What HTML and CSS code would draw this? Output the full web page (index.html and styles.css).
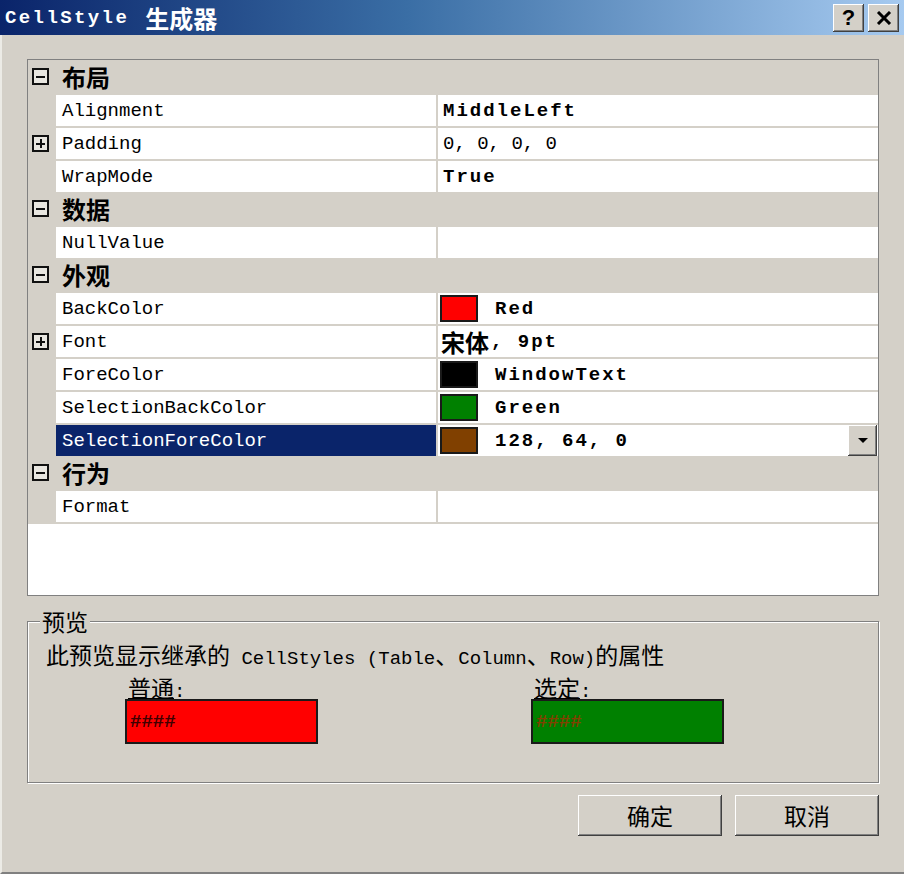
FILE: index.html
```html
<!DOCTYPE html>
<html lang="zh-CN">
<head>
<meta charset="utf-8">
<title>CellStyle 生成器</title>
<link rel="stylesheet" href="styles.css">
</head>
<body>
<div class="window">
  <div class="titlebar">
    <div class="title"><span class="lat">CellStyle</span><span class="zh">生成器</span></div>
    <div class="tbtns">
      <div class="tbtn help">?</div>
      <div class="tbtn close"><svg width="16" height="14" viewBox="0 0 16 14"><path d="M2 1 L14 13 M14 1 L2 13" stroke="#000" stroke-width="3" fill="none"/></svg></div>
    </div>
  </div>
  <div class="main">
    <div class="grid">
      <div class="row cat"><div class="gut"><span class="exp"></span></div><div class="cat-label">布局</div></div>
      <div class="row prop"><div class="gut"></div><div class="name">Alignment</div><div class="val bold">MiddleLeft</div></div>
      <div class="row prop"><div class="gut"><span class="exp plus"></span></div><div class="name">Padding</div><div class="val">0, 0, 0, 0</div></div>
      <div class="row prop"><div class="gut"></div><div class="name">WrapMode</div><div class="val bold">True</div></div>
      <div class="row cat"><div class="gut"><span class="exp"></span></div><div class="cat-label">数据</div></div>
      <div class="row prop"><div class="gut"></div><div class="name">NullValue</div><div class="val"></div></div>
      <div class="row cat"><div class="gut"><span class="exp"></span></div><div class="cat-label">外观</div></div>
      <div class="row prop"><div class="gut"></div><div class="name">BackColor</div><div class="val bold"><span class="swatch red"></span>Red</div></div>
      <div class="row prop"><div class="gut"><span class="exp plus"></span></div><div class="name">Font</div><div class="val bold font-val"><span class="zhb">宋体</span>, 9pt</div></div>
      <div class="row prop"><div class="gut"></div><div class="name">ForeColor</div><div class="val bold"><span class="swatch black"></span>WindowText</div></div>
      <div class="row prop"><div class="gut"></div><div class="name">SelectionBackColor</div><div class="val bold"><span class="swatch green"></span>Green</div></div>
      <div class="row prop selected"><div class="gut"></div><div class="name">SelectionForeColor</div><div class="val bold"><span class="swatch brown"></span><span class="vtext">128, 64, 0</span><span class="drop"><span class="tri"></span></span></div></div>
      <div class="row cat"><div class="gut"><span class="exp"></span></div><div class="cat-label">行为</div></div>
      <div class="row prop last"><div class="gut"></div><div class="name">Format</div><div class="val"></div></div>
      <div class="fill"></div>
    </div>

    <fieldset class="preview">
      <legend>预览</legend>
      <p class="desc"><span class="zh">此预览显示继承的</span> CellStyles (Table<span class="zh">、</span>Column<span class="zh">、</span>Row)<span class="zh">的属性</span></p>
      <div class="samples">
        <div class="sample">
          <div class="slabel"><span class="zh">普通</span>:</div>
          <div class="sbox normal">####</div>
        </div>
        <div class="sample">
          <div class="slabel"><span class="zh">选定</span>:</div>
          <div class="sbox sel">####</div>
        </div>
      </div>
    </fieldset>

    <div class="actions">
      <button class="btn" type="button">确定</button>
      <button class="btn" type="button">取消</button>
    </div>
  </div>
</div>
</body>
</html>
```

FILE: styles.css
```css
html, body {
  margin: 0;
  padding: 0;
}
body {
  background: #d4d0c8;
  width: 904px;
  height: 874px;
  overflow: hidden;
  font-family: "Liberation Mono", "Noto Sans CJK SC", monospace;
  font-size: 19px;
  color: #000;
}
.window {
  width: 904px;
  height: 874px;
  box-sizing: border-box;
  border-left: 2px solid #ecebe6;
  border-bottom: 2px solid #808080;
  display: flex;
  flex-direction: column;
}
.zh {
  font-family: "Noto Sans CJK SC", sans-serif;
  font-size: 23px;
}
.titlebar {
  height: 35px;
  flex: none;
  background: linear-gradient(to right, #0a246a 0%, #3a6ea5 45%, #a6caf0 100%);
  display: flex;
  align-items: center;
  justify-content: space-between;
  padding: 0 5px 0 5px;
  box-sizing: border-box;
  margin-left: -2px;
}
.title {
  color: #fff;
  font-weight: bold;
  display: flex;
  align-items: center;
  gap: 16px;
  line-height: 30px;
}
.title .lat {
  letter-spacing: 2.4px;
}
.title .zh {
  font-size: 24px;
  font-weight: bold;
}
.tbtns {
  display: flex;
  gap: 4px;
}
.tbtn {
  width: 31px;
  height: 28px;
  box-sizing: border-box;
  background: #d4d0c8;
  box-shadow: inset -1px -1px 0 #404040, inset 1px 1px 0 #ffffff, inset -2px -2px 0 #808080;
  display: flex;
  align-items: center;
  justify-content: center;
  font-family: "Liberation Sans", sans-serif;
  font-weight: bold;
  font-size: 22px;
  line-height: 1;
}
.main {
  padding: 24px 0 0 25px;
  display: flex;
  flex-direction: column;
}
.grid {
  width: 852px;
  height: 537px;
  box-sizing: border-box;
  border: 1px solid #808080;
  display: flex;
  flex-direction: column;
  background: #d4d0c8;
}
.row {
  height: 33px;
  flex: none;
  display: flex;
  box-sizing: border-box;
}
.row.prop {
  border-top: 2px solid #d4d0c8;
}
.row.last {
  height: 35px;
  border-bottom: 2px solid #d4d0c8;
}
.gut {
  width: 28px;
  flex: none;
  display: flex;
  align-items: center;
  padding-left: 4px;
  box-sizing: border-box;
}
.exp {
  width: 17px;
  height: 17px;
  box-sizing: border-box;
  border: 2px solid #111;
  position: relative;
  background: #e8e6e0;
}
.exp::before {
  content: "";
  position: absolute;
  left: 2px;
  right: 2px;
  top: 5.5px;
  height: 2px;
  background: #111;
}
.exp.plus::after {
  content: "";
  position: absolute;
  top: 2px;
  bottom: 2px;
  left: 5.5px;
  width: 2px;
  background: #111;
}
.cat-label {
  font-family: "Noto Sans CJK SC", sans-serif;
  font-weight: bold;
  font-size: 24px;
  padding-left: 6px;
  display: flex;
  align-items: center;
  letter-spacing: 0;
}
.name {
  width: 380px;
  flex: none;
  background: #fff;
  padding-left: 6px;
  box-sizing: border-box;
  display: flex;
  align-items: center;
  white-space: nowrap;
}
.selected .name {
  background: #0a246a;
  color: #fff;
}
.val {
  flex: 1;
  margin-left: 2px;
  background: #fff;
  padding-left: 5px;
  display: flex;
  align-items: center;
  white-space: nowrap;
}
.val.bold {
  font-weight: bold;
  letter-spacing: 2px;
}
.swatch {
  width: 38px;
  height: 27px;
  box-sizing: border-box;
  border: 2px solid #1a1a1a;
  margin-left: -3px;
  margin-right: 17px;
  flex: none;
}
.swatch.red { background: #ff0000; }
.swatch.black { background: #000; }
.swatch.green { background: #008000; }
.swatch.brown { background: #804000; }
.font-val {
  padding-left: 3px;
  letter-spacing: 3px;
}
.zhb {
  font-family: "Noto Sans CJK SC", sans-serif;
  font-size: 24px;
  letter-spacing: 0;
  margin-right: 2px;
}
.vtext {
  flex: 1;
}
.drop {
  width: 29px;
  height: 31px;
  box-sizing: border-box;
  margin-right: 1px;
  background: #d4d0c8;
  box-shadow: inset -1px -1px 0 #404040, inset 1px 1px 0 #ffffff, inset -2px -2px 0 #808080;
  display: flex;
  align-items: center;
  justify-content: center;
}
.tri {
  width: 0;
  height: 0;
  border-left: 5px solid transparent;
  border-right: 5px solid transparent;
  border-top: 5px solid #000;
}
.fill {
  flex: 1;
  background: #fff;
}

.preview {
  width: 852px;
  box-sizing: border-box;
  margin: 12px 0 0 0;
  padding: 0 0 38px 0;
  border: 1px solid #808080;
  box-shadow: inset 1px 1px 0 #fff, 1px 1px 0 #fff;
  min-inline-size: 0;
}
.preview legend {
  font-family: "Noto Sans CJK SC", sans-serif;
  font-size: 23px;
  line-height: 26px;
  padding: 0 2px;
  margin-left: 12px;
  background: #d4d0c8;
}
.desc {
  margin: 6px 0 0 18px;
  line-height: 28px;
  white-space: nowrap;
}
.samples {
  display: flex;
  gap: 213px;
  padding-left: 97px;
  margin-top: 2px;
}
.sample {
  display: flex;
  flex-direction: column;
}
.slabel {
  padding-left: 3px;
  line-height: 24px;
  height: 24px;
}
.slabel .zh {
  text-decoration: underline;
  text-decoration-thickness: 1px;
  text-underline-offset: 1px;
}
.sbox {
  width: 193px;
  height: 45px;
  box-sizing: border-box;
  border: 2px solid #1a1a1a;
  display: flex;
  align-items: center;
  padding-left: 3px;
  font-family: "Liberation Mono", monospace;
  font-size: 19px;
  font-weight: bold;
}
.sbox.normal {
  background: #ff0000;
  color: #400000;
}
.sbox.sel {
  background: #008000;
  color: #804000;
}
.actions {
  display: flex;
  justify-content: flex-end;
  gap: 13px;
  width: 852px;
  margin-top: 12px;
}
.btn {
  width: 144px;
  height: 41px;
  background: #d4d0c8;
  border: none;
  box-shadow: inset -1px -1px 0 #404040, inset 1px 1px 0 #ffffff, inset -2px -2px 0 #808080;
  font-family: "Noto Sans CJK SC", sans-serif;
  font-size: 23px;
  color: #000;
  padding: 0;
  line-height: 41px;
}
```
